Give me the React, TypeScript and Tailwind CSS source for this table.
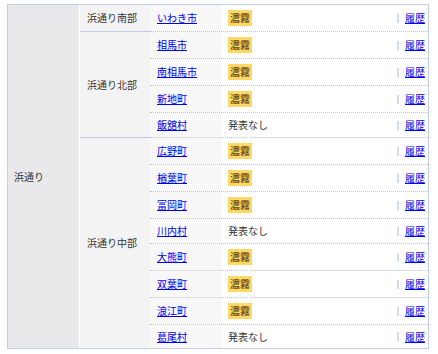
import React from "react";

type Row = { name: string; fog: boolean };
type Group = { label: string; rows: Row[] };

const groups: Group[] = [
  { label: "浜通り南部", rows: [{ name: "いわき市", fog: true }] },
  {
    label: "浜通り北部",
    rows: [
      { name: "相馬市", fog: true },
      { name: "南相馬市", fog: true },
      { name: "新地町", fog: true },
      { name: "飯舘村", fog: false },
    ],
  },
  {
    label: "浜通り中部",
    rows: [
      { name: "広野町", fog: true },
      { name: "楢葉町", fog: true },
      { name: "富岡町", fog: true },
      { name: "川内村", fog: false },
      { name: "大熊町", fog: true },
      { name: "双葉町", fog: true },
      { name: "浪江町", fog: true },
      { name: "葛尾村", fog: false },
    ],
  },
];

export default function App() {
  return (
    <div
      className="w-[438px] h-[354px] bg-white pt-[4px] pl-[7px] text-[10px] leading-[14px] text-[#333]"
      style={{ fontFamily: '"Noto Sans CJK JP", "Noto Sans", sans-serif' }}
    >
      <div className="w-[422px] flex border border-[#c3cde4]">
        <div className="w-[72px] shrink-0 bg-[#e9e9ec] border-r border-white flex items-center pl-[6px]">
          浜通り
        </div>
        <div className="flex-1 flex flex-col">
          {groups.map((g, gi) => {
            const lastGroup = gi === groups.length - 1;
            return (
              <div key={g.label} className="flex">
                <div
                  className={
                    "w-[70px] shrink-0 bg-[#f3f3f3] flex items-center pl-[7px] " +
                    (lastGroup ? "" : "border-b border-[#c3cde4]")
                  }
                >
                  {g.label}
                </div>
                <div className="flex-1 flex flex-col">
                  {g.rows.map((r, ri) => {
                    const last = lastGroup && ri === g.rows.length - 1;
                    const h = r.fog
                      ? last
                        ? "h-[26px]"
                        : "h-[27px]"
                      : last
                      ? "h-[23px]"
                      : "h-[25px]";
                    return (
                      <div
                        key={r.name}
                        className={
                          "flex items-stretch box-border overflow-hidden " +
                          h +
                          " " +
                          (last ? "" : "border-b border-dotted border-[#b8c2de]")
                        }
                      >
                        <div className="w-[72px] shrink-0 bg-[#f8f8f8] pl-[7px] flex items-center">
                          <a className="text-[#0000ee] underline cursor-pointer">{r.name}</a>
                        </div>
                        <div className="flex-1 pl-[6px] flex items-center">
                          {r.fog ? (
                            <span className="block h-[16px] bg-[#fdd865] px-[2px] leading-[16px] text-[#3a2f10]">
                              濃霧
                            </span>
                          ) : (
                            <span>発表なし</span>
                          )}
                        </div>
                        <div className="flex items-center pr-[3px]">
                          <span className="w-[2px] h-[9px] bg-[#d3daea] mr-[6px]" />
                          <a className="text-[#0000ee] underline cursor-pointer">履歴</a>
                        </div>
                      </div>
                    );
                  })}
                </div>
              </div>
            );
          })}
        </div>
      </div>
    </div>
  );
}
